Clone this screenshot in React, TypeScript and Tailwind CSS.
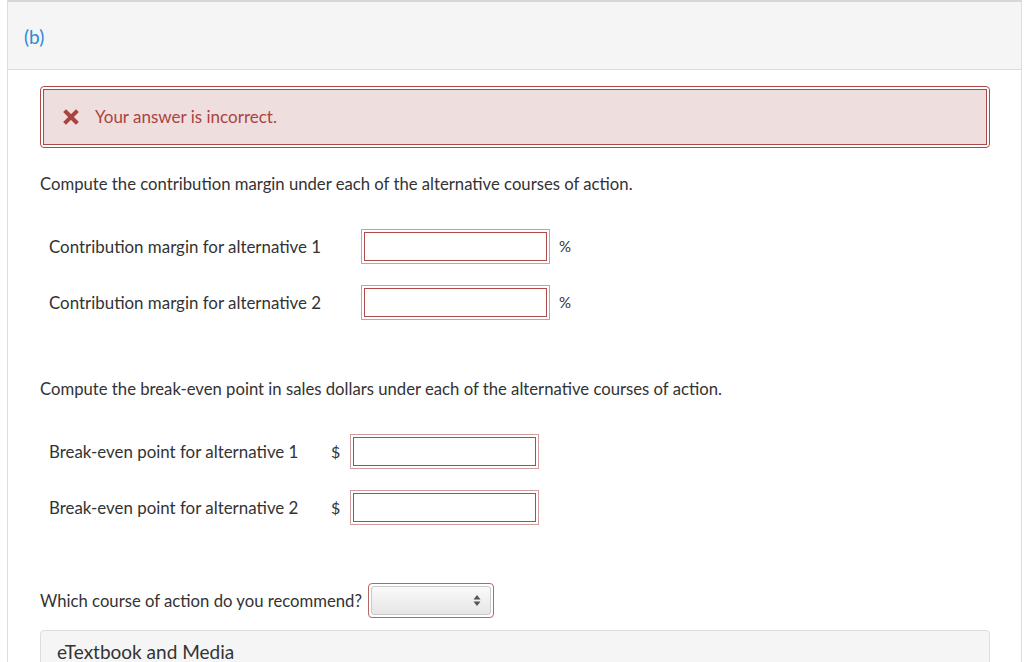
import React from "react";

function TextInput({ w }: { w: string }) {
  return (
    <div className={`border border-[#cf9d9d] p-[2px] ${w} h-[35px] flex`}>
      <div className="flex-1 border border-[#b04a48] bg-white" />
    </div>
  );
}

export default function App() {
  return (
    <div
      className="w-[1024px] h-[662px] overflow-hidden bg-white text-[#333333]"
      style={{ fontFamily: "Lato, 'Open Sans', sans-serif" }}
    >
      <div className="ml-[7px] w-[1015px] h-[700px] border border-[#dddddd] border-t-[2px] border-t-[#d6d6d6]">
        <div className="h-[68px] bg-[#f5f5f5] border-b border-[#dddddd] pl-[16px] pt-[21px]">
          <span className="text-[19px] text-[#2b8ae0]">(b)</span>
        </div>
        <div className="pl-[32px] pr-[31px] pt-[16px]">
          <div className="h-[62px] rounded-[4px] border border-[#ad4a48] p-[2px] flex">
            <div className="flex-1 border border-[#ad4a48] bg-[#efdede] flex items-center pl-[19px]">
              <svg width="16" height="16" viewBox="0 0 16 16" className="mr-[16px]">
                <path d="M3 3 L13 13 M13 3 L3 13" stroke="#a94442" strokeWidth="4" strokeLinecap="square" />
              </svg>
              <span className="text-[17px] text-[#a94442]">Your answer is incorrect.</span>
            </div>
          </div>

          <div className="mt-[24px] text-[16.7px] leading-[24px]">
            Compute the contribution margin under each of the alternative courses of action.
          </div>

          <div className="mt-[33px] flex items-center">
            <div className="w-[321px] pl-[9px] text-[16.9px]">Contribution margin for alternative 1</div>
            <TextInput w="w-[189px]" />
            <span className="ml-[9px] text-[15px]">%</span>
          </div>
          <div className="mt-[21px] flex items-center">
            <div className="w-[321px] pl-[9px] text-[16.9px]">Contribution margin for alternative 2</div>
            <TextInput w="w-[189px]" />
            <span className="ml-[9px] text-[15px]">%</span>
          </div>

          <div className="mt-[57px] text-[16.7px] leading-[24px]">
            Compute the break-even point in sales dollars under each of the alternative courses of action.
          </div>

          <div className="mt-[33px] flex items-center">
            <div className="w-[291px] pl-[9px] text-[16.9px]">Break-even point for alternative 1</div>
            <span className="w-[19px] text-[16px]">$</span>
            <TextInput w="w-[189px]" />
          </div>
          <div className="mt-[21px] flex items-center">
            <div className="w-[291px] pl-[9px] text-[16.9px]">Break-even point for alternative 2</div>
            <span className="w-[19px] text-[16px]">$</span>
            <TextInput w="w-[189px]" />
          </div>

          <div className="mt-[58px] flex items-center">
            <span className="text-[16.7px] w-[328px] whitespace-nowrap pt-[2px]">Which course of action do you recommend?</span>
            <div className="w-[126px] h-[35px] rounded-[4px] border border-[#b56664] p-[2px] flex">
              <div className="flex-1 rounded-[3px] border border-[#c9c9c9] bg-gradient-to-b from-[#fafafa] to-[#e6e6e6] flex items-center justify-end pr-[9px]">
                <svg width="8" height="13" viewBox="0 0 8 13">
                  <path d="M4 1 L7.5 5.5 L0.5 5.5 Z M4 12 L7.5 7.5 L0.5 7.5 Z" fill="#555" />
                </svg>
              </div>
            </div>
          </div>

          <div className="mt-[12px] h-[60px] rounded-[4px] border border-[#dddddd] bg-[#f5f5f5] pl-[16px] pt-[7px]">
            <span className="text-[19px] leading-[28px]">eTextbook and Media</span>
          </div>
        </div>
      </div>
    </div>
  );
}
